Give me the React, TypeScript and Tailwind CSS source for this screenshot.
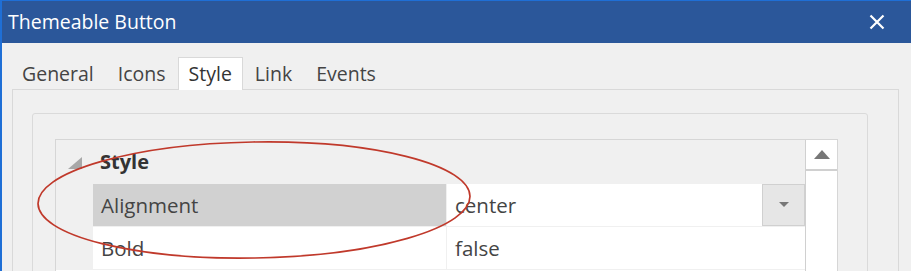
import React from "react";

const font = { fontFamily: '"Open Sans", "Noto Sans", sans-serif' };

function Tab({ label, active = false }: { label: string; active?: boolean }) {
  if (active) {
    return (
      <div className="relative z-10 -mb-px flex h-[33px] items-center border border-b-0 border-[#d9d9d9] bg-white px-[10px] text-[19.5px] text-[#333]">
        {label}
      </div>
    );
  }
  return (
    <div className="flex h-[32px] items-center px-[12px] pt-[2px] text-[19.5px] text-[#444]">
      {label}
    </div>
  );
}

function PropRow({ name, value, selected = false, dropdown = false }: { name: string; value: string; selected?: boolean; dropdown?: boolean }) {
  return (
    <div className="flex h-[43px] border-b border-[#f0f0f0]">
      <div className="w-[37px] shrink-0 bg-[#f0f0f0]" />
      <div
        className={`flex w-[353px] shrink-0 items-center pl-[8px] text-[20.5px] text-[#444] ${
          selected ? "bg-[#d1d1d1]" : "bg-white"
        }`}
      >
        {name}
      </div>
      <div className="w-px shrink-0 bg-[#f0f0f0]" />
      <div className="flex flex-1 items-center bg-white pl-[8px] text-[20.5px] text-[#444]">
        <span className="flex-1">{value}</span>
        {dropdown && (
          <div className="flex h-[42px] w-[43px] items-center justify-center border border-[#d0d0d0] bg-[#e6e6e6]">
            <svg width="10" height="6" viewBox="0 0 10 6">
              <path d="M0 0 L10 0 L5 5 Z" fill="#777" />
            </svg>
          </div>
        )}
      </div>
    </div>
  );
}

export default function App() {
  return (
    <div
      className="relative h-[271px] w-[911px] overflow-hidden border-l-2 border-t border-[#1f6fd6] bg-[#f0f0f0]"
      style={font}
    >
      {/* Title bar */}
      <div className="flex h-[42px] items-center justify-between bg-[#2b579a] pl-[6px] pr-[26px]">
        <span className="text-[19.5px] text-white">Themeable Button</span>
        <svg width="16" height="16" viewBox="0 0 16 16">
          <path d="M1.5 1.5 L14.5 14.5 M14.5 1.5 L1.5 14.5" stroke="white" strokeWidth="2.2" />
        </svg>
      </div>

      {/* Tabs */}
      <div className="flex items-end pl-[8px] pt-[14px]">
        <Tab label="General" />
        <Tab label="Icons" />
        <Tab label="Style" active />
        <Tab label="Link" />
        <Tab label="Events" />
      </div>

      {/* Tab panel */}
      <div className="ml-[10px] h-[200px] w-[887px] border border-[#d9d9d9] bg-[#f0f0f0] pl-[19px] pr-[30px] pt-[23px]">
        <div className="h-[200px] rounded-[3px] border border-[#dadada] pl-[22px] pr-[29px] pt-[25px]">
          <div className="flex h-[200px] border border-[#d6d6d6] bg-white">
            <div className="flex-1">
              {/* Category */}
              <div className="flex h-[44px] items-center bg-[#f0f0f0]">
                <div className="ml-[12px] mr-[18px] flex w-[14px] pt-[2px]">
                  <svg width="14" height="12" viewBox="0 0 14 12">
                    <path d="M14 0 L14 12 L0 12 Z" fill="#a8a8a8" />
                  </svg>
                </div>
                <span className="text-[20px] font-bold text-[#333]">Style</span>
              </div>
              <PropRow name="Alignment" value="center" selected dropdown />
              <PropRow name="Bold" value="false" />
            </div>
            {/* Scrollbar */}
            <div className="w-[32px] shrink-0 border-l border-[#d0d0d0] bg-white">
              <div className="flex h-[31px] items-center justify-center border-b-2 border-[#d0d0d0]">
                <svg width="16" height="9" viewBox="0 0 16 9">
                  <path d="M0 9 L8 0 L16 9 Z" fill="#777" />
                </svg>
              </div>
            </div>
          </div>
        </div>
      </div>

      {/* Annotation ellipse */}
      <svg className="pointer-events-none absolute left-0 top-0" width="911" height="271">
        <ellipse cx="252" cy="199" rx="216" ry="58" fill="none" stroke="#c0392b" strokeWidth="1.7" transform="rotate(-1 252 199)" />
      </svg>
    </div>
  );
}
